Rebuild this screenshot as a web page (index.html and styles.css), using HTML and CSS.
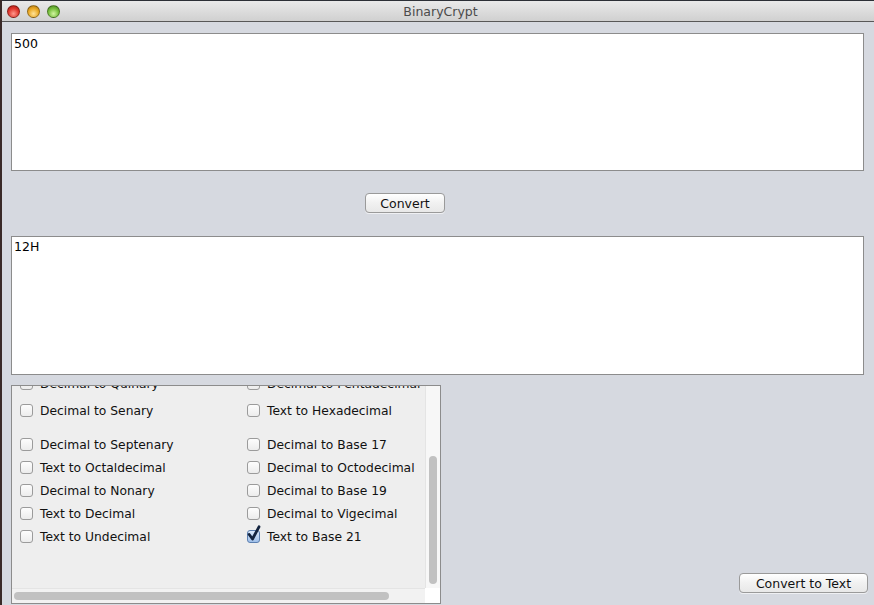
FILE: index.html
```html
<!DOCTYPE html>
<html lang="en">
<head>
  <meta charset="UTF-8" />
  <title>BinaryCrypt</title>
  <link rel="stylesheet" href="styles.css">
</head>
<body>
  <div class="window">
    <header class="titlebar">
      <div class="lights">
        <span class="light red"></span>
        <span class="light yellow"></span>
        <span class="light green"></span>
      </div>
      <div class="title">BinaryCrypt</div>
    </header>

    <main class="content">
      <div class="text-area">500</div>

      <div class="center-row">
        <button class="mac-button convert">Convert</button>
      </div>

      <div class="text-area output">12H</div>

      <div class="bottom-row">
        <section class="scroll-pane">
          <div class="viewport">
            <div class="options">
              <label class="option first"><span class="box"></span>Decimal to Quinary</label>
              <label class="option first"><span class="box"></span>Decimal to Pentadecimal</label>
              <label class="option"><span class="box"></span>Decimal to Senary</label>
              <label class="option"><span class="box"></span>Text to Hexadecimal</label>
              <label class="option spaced"><span class="box"></span>Decimal to Septenary</label>
              <label class="option spaced"><span class="box"></span>Decimal to Base 17</label>
              <label class="option"><span class="box"></span>Text to Octaldecimal</label>
              <label class="option"><span class="box"></span>Decimal to Octodecimal</label>
              <label class="option"><span class="box"></span>Decimal to Nonary</label>
              <label class="option"><span class="box"></span>Decimal to Base 19</label>
              <label class="option"><span class="box"></span>Text to Decimal</label>
              <label class="option"><span class="box"></span>Decimal to Vigecimal</label>
              <label class="option"><span class="box"></span>Text to Undecimal</label>
              <label class="option"><span class="box checked">
                <svg class="tick" width="14" height="17" viewBox="0 0 14 17"><path d="M2.2 9.5 L5.5 14 L12 1.8" fill="none" stroke="#13243f" stroke-width="2.8" stroke-linejoin="round" stroke-linecap="round"/></svg>
              </span>Text to Base 21</label>
            </div>
          </div>
          <div class="vscroll"><div class="vthumb"></div></div>
          <div class="hscroll"><div class="hthumb"></div></div>
          <div class="corner"></div>
        </section>

        <button class="mac-button to-text">Convert to Text</button>
      </div>
    </main>
  </div>
</body>
</html>
```

FILE: styles.css
```css
body {
  margin: 0;
  padding: 0;
  background-color: #d6d9e0;
  font-family: 'DejaVu Sans', 'Liberation Sans', sans-serif;
  font-size: 12px;
  overflow: hidden;
}

.window {
  width: 874px;
  height: 605px;
  display: flex;
  flex-direction: column;
  background-color: #d6d9e0;
  border-left: 2px solid #3a2a28;
  box-sizing: border-box;
}

.titlebar {
  height: 22px;
  box-sizing: border-box;
  border-top: 1px solid #2c2f36;
  border-bottom: 1px solid #585858;
  background: linear-gradient(#e9e9e9, #d0d0d0);
  display: flex;
  align-items: center;
}

.lights {
  display: flex;
  gap: 7px;
  padding-left: 5px;
  width: 200px;
}

.light {
  width: 13px;
  height: 13px;
  border-radius: 50%;
  box-sizing: border-box;
  border: 1px solid rgba(0, 0, 0, 0.35);
}

.light.red {
  background: radial-gradient(circle at 50% 70%, #ff9a8e, #e0362c 55%, #a2150d);
}

.light.yellow {
  background: radial-gradient(circle at 50% 70%, #ffe39a, #e9a823 55%, #a86e0a);
}

.light.green {
  background: radial-gradient(circle at 50% 70%, #d3f5a2, #76be3c 55%, #3f7f17);
}

.title {
  flex: 1;
  text-align: center;
  margin-right: 200px;
  color: #4b4b4b;
  font-size: 12.5px;
}

.content {
  flex: 1;
  display: flex;
  flex-direction: column;
  padding: 11px 10px 0 9px;
}

.text-area {
  height: 138px;
  box-sizing: border-box;
  background-color: #fff;
  border: 1px solid #8c8c8c;
  padding: 2px 2px;
  color: #000;
  font-size: 12.5px;
}

.text-area.output {
  height: 139px;
}

.center-row {
  display: flex;
  padding: 22px 0 23px 354px;
}

.mac-button {
  height: 20px;
  box-sizing: border-box;
  border: 1px solid #9a9a9a;
  border-radius: 4px;
  background: linear-gradient(#ffffff, #f1f1f1 50%, #e8e8e8);
  font-family: inherit;
  font-size: 12.5px;
  color: #111;
  padding: 0;
  box-shadow: 0 1px 0 rgba(255, 255, 255, 0.6);
}

.convert {
  width: 80px;
}

.to-text {
  width: 129px;
  margin-bottom: 12px;
  margin-right: -4px;
}

.bottom-row {
  flex: 1;
  display: flex;
  justify-content: space-between;
  align-items: flex-end;
  padding-top: 10px;
}

.scroll-pane {
  width: 430px;
  height: 219px;
  box-sizing: border-box;
  border: 1px solid #8c8c8c;
  background-color: #eeeeee;
  display: grid;
  grid-template-columns: 1fr 15px;
  grid-template-rows: 1fr 15px;
  align-self: flex-start;
}

.viewport {
  overflow: hidden;
}

.options {
  display: grid;
  grid-template-columns: 227px 1fr;
  margin-top: -13px;
  padding-left: 8px;
  white-space: nowrap;
  font-size: 12.3px;
}

.option {
  height: 23px;
  display: flex;
  align-items: center;
  color: #111;
}

.option.first {
  height: 26px;
  align-items: flex-start;
  padding-top: 4px;
  box-sizing: border-box;
}

.option.spaced {
  margin-top: 11px;
}

.box {
  width: 13px;
  height: 13px;
  box-sizing: border-box;
  border: 1px solid #9b9b9b;
  border-radius: 3px;
  background: linear-gradient(#fdfdfd, #ececec);
  margin-right: 7px;
  display: flex;
  justify-content: center;
}

.box.checked {
  border-color: #5b7fb0;
  background: linear-gradient(#dbe9fb, #9ebfe9);
  overflow: visible;
}

.tick {
  margin-top: -6px;
  margin-left: 1px;
  flex: none;
}

.vscroll {
  background-color: #f7f7f7;
  border-left: 1px solid #e4e4e4;
  display: flex;
  justify-content: center;
  padding-top: 70px;
  padding-bottom: 4px;
}

.vthumb {
  width: 8px;
  height: 128px;
  border-radius: 4px;
  background-color: #c1c1c1;
}

.hscroll {
  background-color: #f2f2f2;
  border-top: 1px solid #e4e4e4;
  display: flex;
  align-items: center;
  padding-left: 2px;
}

.hthumb {
  width: 375px;
  height: 8px;
  border-radius: 4px;
  background-color: #c1c1c1;
}

.corner {
  background-color: #ffffff;
}
```
